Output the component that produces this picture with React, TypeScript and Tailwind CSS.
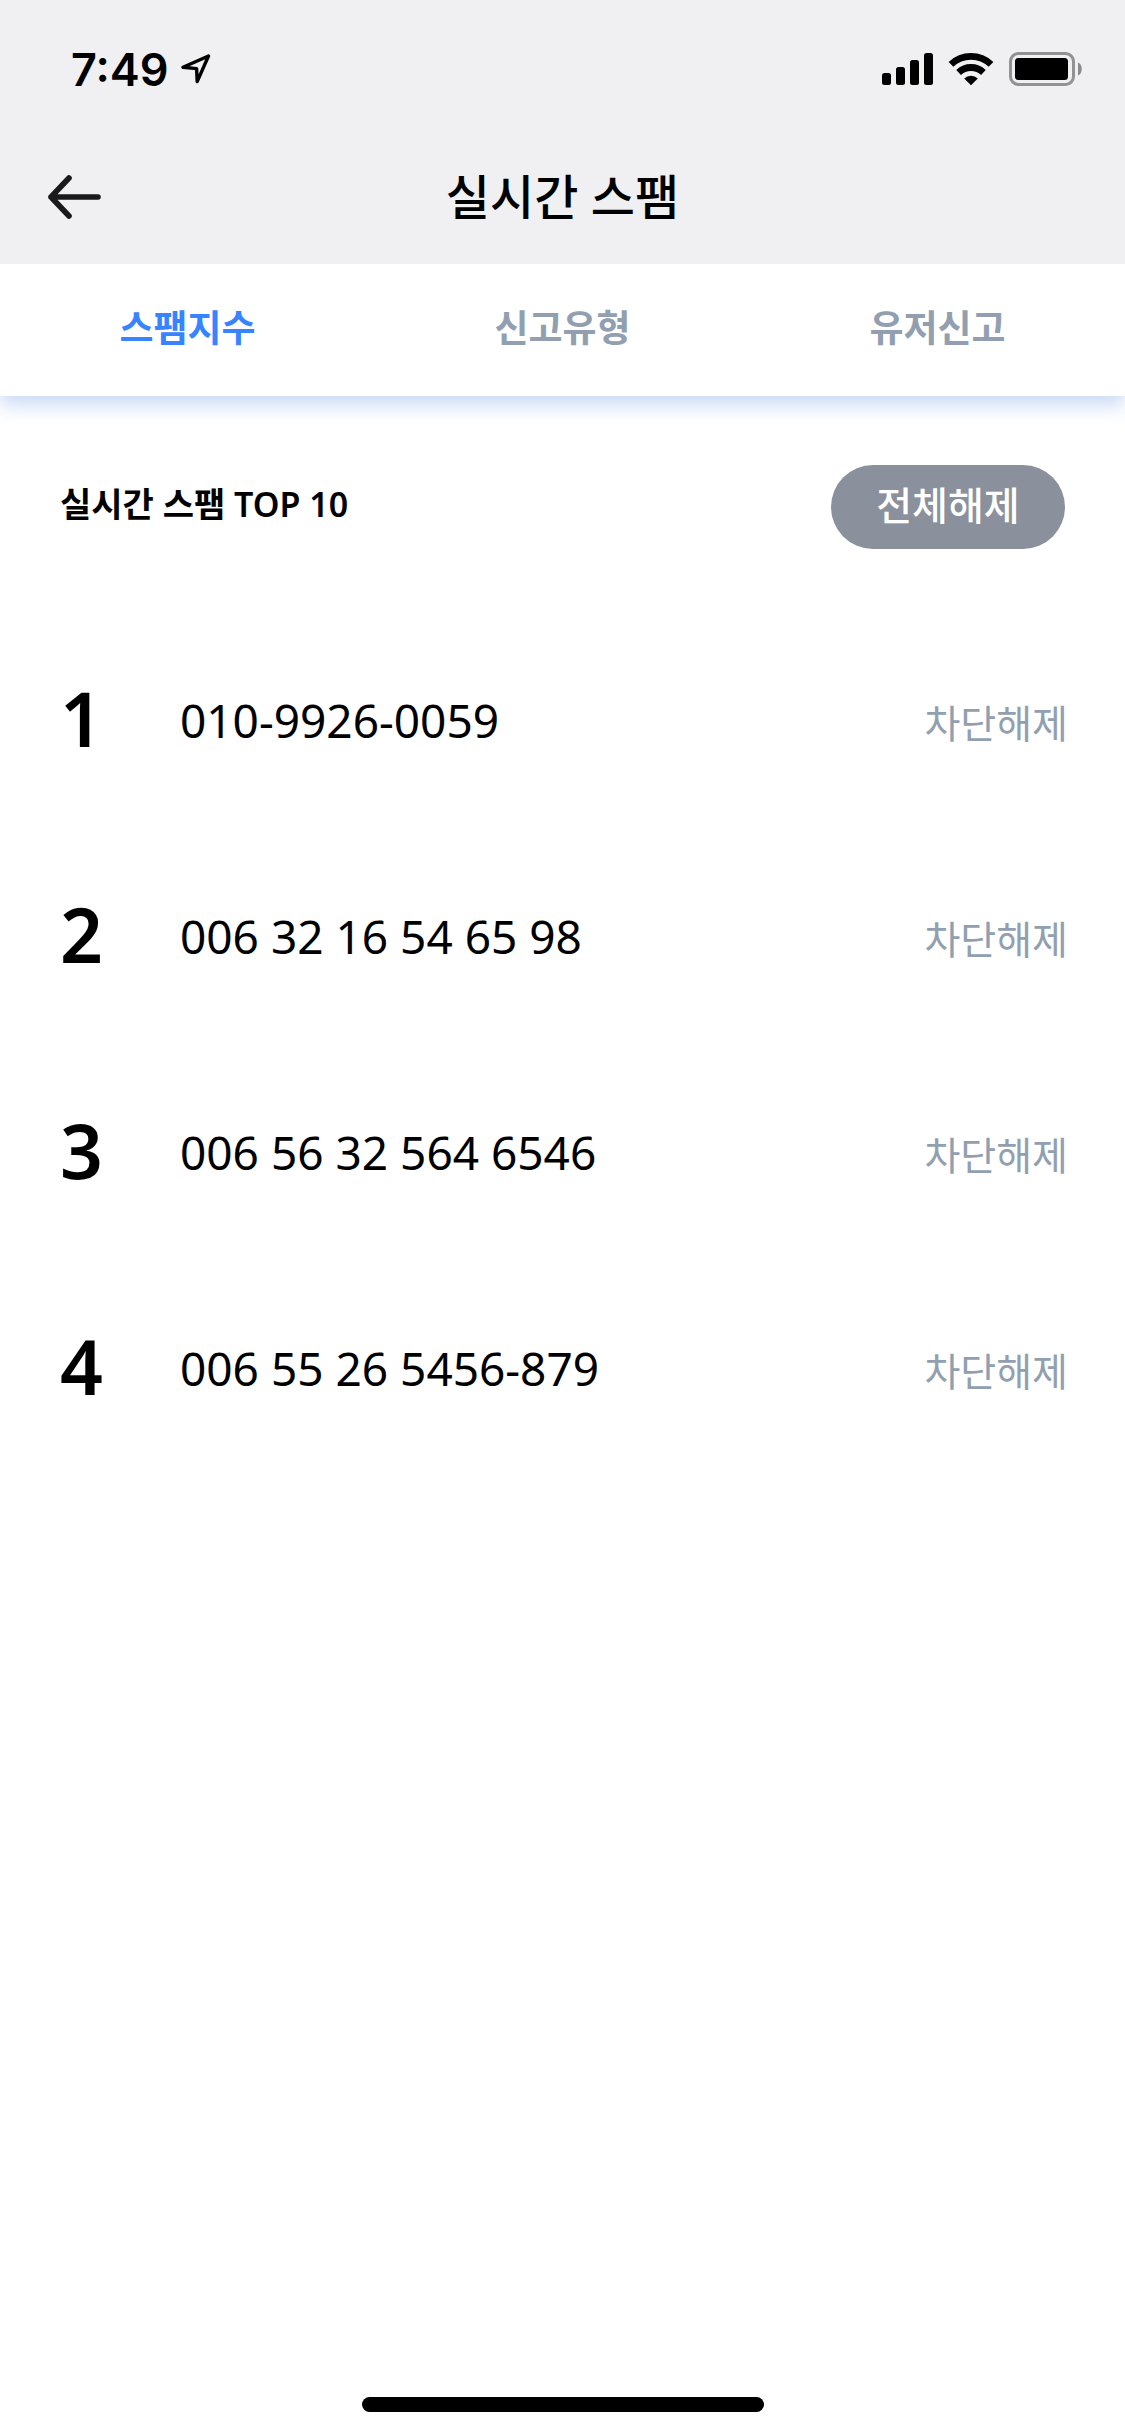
import { useState } from "react";

const tabs = ["스팸지수", "신고유형", "유저신고"];

const spamNumbers = ["010-9926-0059", "006 32 16 54 65 98", "006 56 32 564 6546", "006 55 26 5456-879"];

function StatusBar() {
  return (
    <div className="flex h-33 items-center justify-between pt-1.5 pr-[43px] pl-[71px]">
      <div className="flex items-center gap-3">
        <span className="font-['Inter',sans-serif] text-[45px] leading-none font-semibold">7:49</span>
        <svg width="30" height="30" viewBox="0 0 30 30" fill="none" stroke="black" strokeWidth="3.4" strokeLinejoin="round">
          <path d="M27.5 2 2 13.2 15.6 14.6 16.2 27.6Z" />
        </svg>
      </div>
      <div className="flex items-center gap-[15px]">
        <svg width="51" height="34" viewBox="0 0 51 34">
          <rect x="0" y="21" width="9" height="12" rx="2.5" />
          <rect x="14" y="15" width="9" height="18" rx="2.5" />
          <rect x="28" y="8" width="9" height="25" rx="2.5" />
          <rect x="42" y="1" width="9" height="32" rx="2.5" />
        </svg>
        <svg width="46" height="34" viewBox="0 0 46 34" fill="none" stroke="black" strokeWidth="6.8">
          <path d="M3 12.4a29 29 0 0 1 40 0" />
          <path d="M10.6 20.4a18.2 18.2 0 0 1 24.8 0" />
          <path d="M23 33.2 16.2 26.4a10 10 0 0 1 13.6 0Z" fill="black" stroke="none" />
        </svg>
        <svg width="73" height="34" viewBox="0 0 73 34">
          <rect x="1.5" y="1.5" width="63" height="31" rx="8" fill="none" stroke="#929294" strokeWidth="3" />
          <rect x="6" y="6" width="53" height="22" rx="3.5" />
          <path d="M69 10.5c5 2 5 11 0 13Z" fill="#8a8a8c" />
        </svg>
      </div>
    </div>
  );
}

export default function App() {
  const [active, setActive] = useState(0);

  return (
    <div className="flex min-h-screen flex-col bg-white font-['Noto_Sans','Noto_Sans_CJK_KR',sans-serif] text-black" lang="ko">
      <header className="relative z-10 bg-[#f0f0f2]">
        <StatusBar />
        <div className="grid h-33 grid-cols-3 items-center px-12 pb-0.5">
          <button type="button" aria-label="뒤로" className="w-fit">
            <svg width="53" height="44" viewBox="0 0 53 44" fill="none" stroke="#1a1a1a" strokeWidth="5.6" strokeLinecap="round" strokeLinejoin="round">
              <path d="M21 3 3 22l18 19M3 22h47" />
            </svg>
          </button>
          <h1 className="text-center text-5xl font-medium whitespace-nowrap">실시간 스팸</h1>
        </div>
      </header>

      <nav className="grid h-33 grid-cols-3 shadow-[0_9px_18px_rgba(62,118,218,0.28)]">
        {tabs.map((tab, i) => (
          <button
            key={tab}
            type="button"
            onClick={() => setActive(i)}
            className={`pb-1 text-[37px] font-bold ${active === i ? "text-[#3883ff]" : "text-[#929fb0]"}`}
          >
            {tab}
          </button>
        ))}
      </nav>

      <main className="flex-1 pt-[69px] pl-[60px]">
        <div className="flex items-center justify-between pr-[60px]">
          <h2 className="pb-1.5 text-[34px] font-semibold">실시간 스팸 TOP 10</h2>
          <button type="button" className="h-21 w-[234px] rounded-full bg-[#8b909d] pb-1.5 text-[39px] leading-none font-medium text-white">
            전체해제
          </button>
        </div>

        <ol className="mt-[63px] pr-[57px]">
          {spamNumbers.map((number, i) => (
            <li key={number} className="flex h-54 items-center">
              <span className="w-30 pb-1 text-[75px] leading-none font-semibold">{i + 1}</span>
              <span className="flex-1 text-[46px]">{number}</span>
              <button type="button" className="pt-1.5 text-[39px] text-[#929fb0]">차단해제</button>
            </li>
          ))}
        </ol>
      </main>

      <footer className="flex justify-center pb-6">
        <div className="h-[15px] w-[402px] rounded-full bg-black" />
      </footer>
    </div>
  );
}
